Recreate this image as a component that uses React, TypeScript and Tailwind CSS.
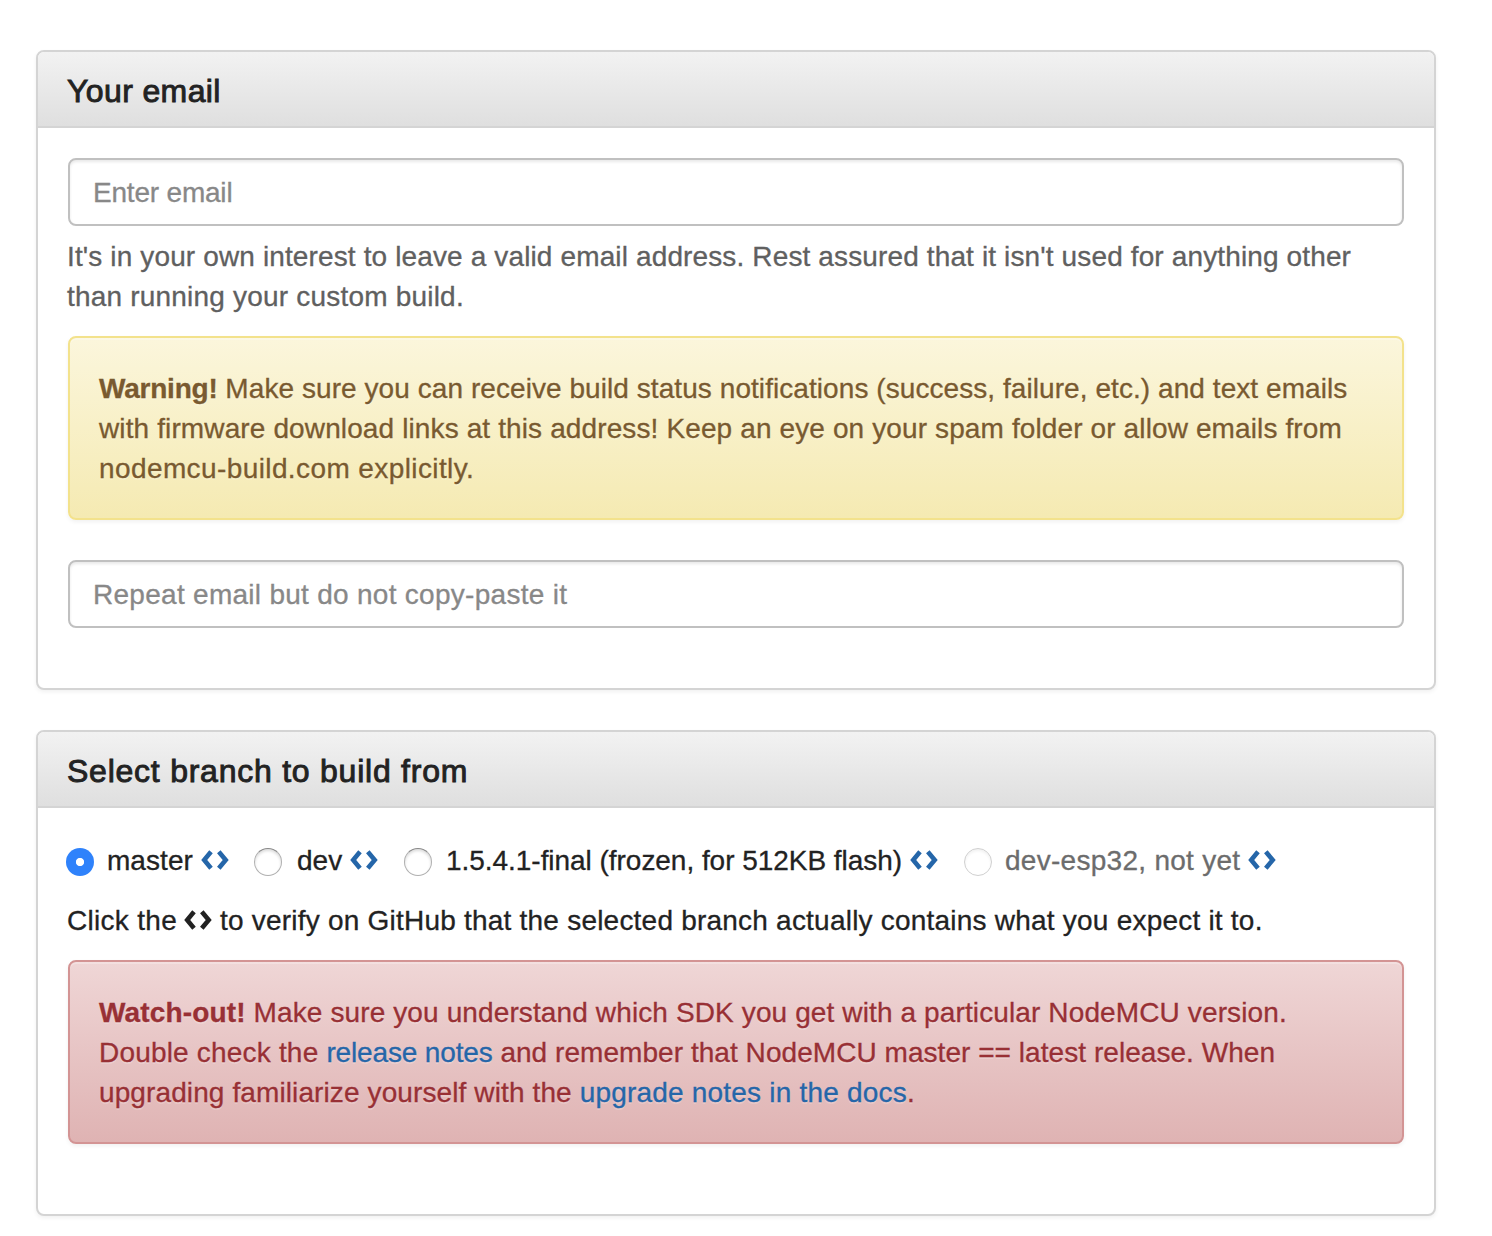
import type { ReactNode } from "react";

function CodeIcon({ className = "" }: { className?: string }) {
  return (
    <svg viewBox="0 0 28 20" className={`relative -top-px h-5 w-7 shrink-0 ${className}`} fill="none" stroke="currentColor" strokeWidth="4.6">
      <path d="M10 1.800 3.200 10l6.800 8.200M17.800 1.800 24.700 10l-6.900 8.200" />
    </svg>
  );
}

function Panel({ title, className, children }: { title: ReactNode; className: string; children: ReactNode }) {
  return (
    <section className={`w-[1400px] overflow-hidden rounded-[8px] border-2 border-[#d4d4d4] bg-white shadow-[0_2px_4px_rgba(0,0,0,0.06)] ${className}`}>
      <h2 className="h-[76px] border-b-2 border-[#d4d4d4] bg-linear-to-b from-[#f2f2f2] to-[#dfdfdf] px-[29px] pt-5 text-[32px] leading-[38px] [-webkit-text-stroke:0.9px_#222]">
        {title}
      </h2>
      <div className="px-[29px]">{children}</div>
    </section>
  );
}

function EmailInput({ placeholder, tracking, className }: { placeholder: string; tracking: string; className: string }) {
  return (
    <input
      type="email"
      placeholder={placeholder}
      className={`ml-px block h-[68px] w-[1336px] rounded-[8px] border-2 border-[#c0c0c0] bg-white px-[23px] pt-px placeholder:text-[#888] shadow-[inset_0_2px_3px_rgba(0,0,0,0.09)] outline-none ${tracking} ${className}`}
    />
  );
}

function Alert({ className, children }: { className: string; children: ReactNode }) {
  return (
    <div className={`ml-px h-[184px] w-[1336px] rounded-[8px] border-2 bg-linear-to-b px-[29px] pt-[31px] shadow-[inset_0_2px_0_rgba(255,255,255,0.25),0_2px_4px_rgba(0,0,0,0.06)] [text-shadow:0_2px_0_rgba(255,255,255,0.2)] ${className}`}>
      {children}
    </div>
  );
}

function Branch({ label, checked, disabled, className, labelClass }: {
  label: string;
  checked?: boolean;
  disabled?: boolean;
  className: string;
  labelClass: string;
}) {
  return (
    <label className={`flex h-10 shrink-0 items-center ${className}`}>
      <input
        type="radio"
        name="branch"
        defaultChecked={checked}
        disabled={disabled}
        className="relative top-px size-7 shrink-0 appearance-none rounded-full border border-[#b0b0b0] border-t-[#888] bg-white shadow-[inset_0_2px_3px_rgba(0,0,0,0.14)] checked:border-0 checked:bg-[radial-gradient(circle,#fff_0,#fff_3.7px,#2f82fb_4.500px)] checked:shadow-none disabled:border-[#d0d0d0] disabled:shadow-[inset_0_2px_3px_rgba(0,0,0,0.06)]"
      />
      <span className={`shrink-0 ${labelClass}`}>{label}</span>
      <CodeIcon className="text-[#2566a9]" />
    </label>
  );
}

export default function App() {
  return (
    <main className="flex h-[1236px] w-[1492px] flex-col gap-10 overflow-hidden bg-white pl-9 pt-[50px] font-['Liberation_Sans',Arial,sans-serif] text-[28px] leading-10 whitespace-nowrap text-[#222] [-webkit-text-stroke:0.3px]">
      <Panel className="h-[640px]" title={<span className="tracking-[0.38px]">Your email</span>}>
        <EmailInput placeholder="Enter email" tracking="tracking-[-0.2px]" className="mt-[30px]" />
        <p className="mt-[11px] text-[#606060]">
          <span className="block tracking-[0.132px]">It's in your own interest to leave a valid email address. Rest assured that it isn't used for anything other</span>
          <span className="block tracking-[0.2px]">than running your custom build.</span>
        </p>
        <Alert className="mt-[19px] border-[#f3e28c] from-[#fbf6dc] to-[#f5eab2] text-[#795a30]">
          <p>
            <strong className="tracking-[-0.220px]">Warning!</strong>
            <span className="tracking-[0.066px]"> Make sure you can receive build status notifications (success, failure, etc.) and text emails</span>
          </p>
          <p className="tracking-[0.122px]">with firmware download links at this address! Keep an eye on your spam folder or allow emails from</p>
          <p className="tracking-[0.400px]">nodemcu-build.com explicitly.</p>
        </Alert>
        <EmailInput placeholder="Repeat email but do not copy-paste it" tracking="tracking-[0.280px]" className="mt-10" />
      </Panel>

      <Panel className="h-[486px]" title={<span className="tracking-[0.760px]">Select branch to build from</span>}>
        <div className="-ml-px mt-[33px] flex">
          <Branch label="master" checked className="w-[188px]" labelClass="ml-[13px] w-[94px] tracking-[0.05px]" />
          <Branch label="dev" className="w-[150px]" labelClass="ml-[15px] w-[53px]" />
          <Branch label="1.5.4.1-final (frozen, for 512KB flash)" className="w-[560px]" labelClass="ml-[14px] w-[464px] tracking-[-0.040px]" />
          <Branch label="dev-esp32, not yet" disabled className="w-[320px] text-[#6c6c6c]" labelClass="ml-[13px] w-[243px] tracking-[0.280px]" />
        </div>
        <p className="mt-5 flex items-center">
          <span className="w-[117px] tracking-[0.3px]">Click the</span>
          <CodeIcon />
          <span className="ml-2 tracking-[0.218px]">to verify on GitHub that the selected branch actually contains what you expect it to.</span>
        </p>
        <Alert className="mt-[19px] border-[#d39494] from-[#efd6d6] to-[#dfb3b3] text-[#983035]">
          <p>
            <strong className="tracking-[0.150px]">Watch-out!</strong>
            <span className="tracking-[0.120px]"> Make sure you understand which SDK you get with a particular NodeMCU version.</span>
          </p>
          <p>
            <span className="tracking-[0.190px]">Double check the </span>
            <a className="tracking-[-0.150px] text-[#2566a9]">release notes</a>
            <span className="tracking-[0.050px]"> and remember that NodeMCU master == latest release. When</span>
          </p>
          <p>
            <span className="tracking-[0.110px]">upgrading familiarize yourself with the </span>
            <a className="tracking-[0.200px] text-[#2566a9]">upgrade notes in the docs</a>.
          </p>
        </Alert>
      </Panel>
    </main>
  );
}
